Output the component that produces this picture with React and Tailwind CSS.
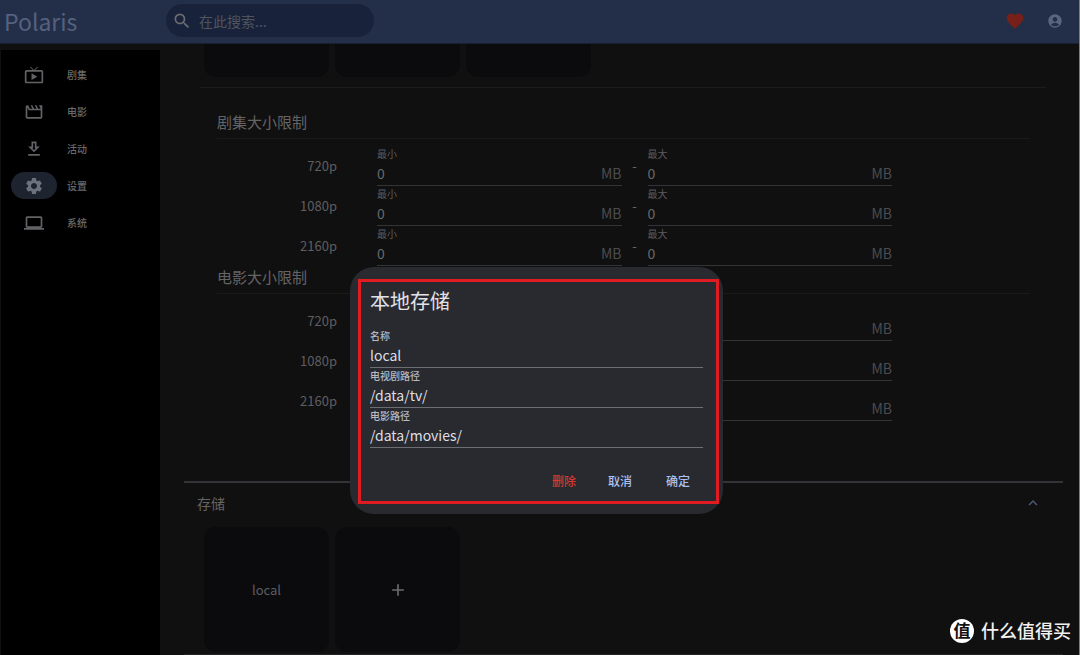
import {
  MdAccountCircle,
  MdAdd,
  MdExpandLess,
  MdFavorite,
  MdOutlineComputer,
  MdOutlineDownload,
  MdOutlineLiveTv,
  MdOutlineMovie,
  MdSearch,
  MdSettings,
} from "react-icons/md";

const navItems = [
  { label: "剧集", Icon: MdOutlineLiveTv },
  { label: "电影", Icon: MdOutlineMovie },
  { label: "活动", Icon: MdOutlineDownload },
  { label: "设置", Icon: MdSettings, active: true },
  { label: "系统", Icon: MdOutlineComputer },
];

const resolutions = ["720p", "1080p", "2160p"];

function Header() {
  return (
    <header className="flex h-11 shrink-0 items-center border-b border-[#192130] bg-[#232f48] pr-4 pb-0.5">
      <h1 className="w-[166px] shrink-0 pl-1 text-[23px] leading-8 text-[#55617f]">Polaris</h1>
      <label className="flex h-[33px] w-52 items-center gap-[7px] rounded-full bg-[#18233b] pl-1.5">
        <MdSearch className="size-5 shrink-0 text-[#6b6c72]" />
        <input
          type="search"
          aria-label="搜索"
          placeholder="在此搜索..."
          className="w-full min-w-0 bg-transparent pr-4 text-[14px] leading-5 outline-none placeholder:text-[#50545f]"
        />
      </label>
      <div className="ml-auto flex items-center gap-[22px]">
        <button type="button" aria-label="收藏">
          <MdFavorite className="size-5 text-[#77201a]" />
        </button>
        <button type="button" aria-label="账户">
          <MdAccountCircle className="size-4 text-[#59647f]" />
        </button>
      </div>
    </header>
  );
}

function Sidebar() {
  return (
    <nav className="mt-1.5 ml-px flex w-[159px] shrink-0 flex-col gap-2.5 bg-black pt-[11px] pl-2.5">
      {navItems.map(({ label, Icon, active }) => (
        <a
          key={label}
          href="#"
          aria-current={active ? "page" : undefined}
          className="flex h-[27px] items-center gap-2.5"
        >
          <span
            className={
              active
                ? "flex h-[27px] w-[46px] items-center justify-center rounded-full bg-[#1e242f] text-[#6c717c]"
                : "flex h-[27px] w-[46px] items-center justify-center text-[#636367]"
            }
          >
            <Icon className="size-5" />
          </span>
          <span className="text-[10px] leading-4 font-medium text-[#69696b]">{label}</span>
        </a>
      ))}
    </nav>
  );
}

function SizeField({ id, label }) {
  return (
    <div className="border-b border-[#343437]">
      <label htmlFor={id} className="block text-[10px] leading-4 text-[#5c5c60]">
        {label}
      </label>
      <div className="flex h-[23px] items-center pb-0.5 text-[14px] leading-5">
        <input
          id={id}
          defaultValue="0"
          className="w-full min-w-0 bg-transparent text-[#69696b] outline-none"
        />
        <span className="text-[#4c4c50]">MB</span>
      </div>
    </div>
  );
}

function SizeLimits({ title, name }) {
  return (
    <section>
      <h2 className="flex h-8 items-center border-b border-[#1a1a1b] pb-0.5 text-[15px] leading-6 text-[#646467]">
        {title}
      </h2>
      <div className="pt-[7px] pr-[138px]">
        {resolutions.map((res) => (
          <div key={res} className="grid h-10 grid-cols-[160px_1fr_26px_1fr]">
            <span className="pt-2.5 pr-10 text-right text-[13px] leading-5 text-[#5e5e61]">
              {res}
            </span>
            <SizeField id={`${name}-${res}-min`} label="最小" />
            <span className="pt-2.5 text-center text-[13px] leading-5 text-[#69696b]">-</span>
            <SizeField id={`${name}-${res}-max`} label="最大" />
          </div>
        ))}
      </div>
    </section>
  );
}

function Settings() {
  return (
    <main className="flex min-w-0 flex-1 flex-col overflow-hidden pr-4 pl-6">
      <div className="h-[437px] shrink-0 pr-[17px] pl-4">
        <div className="flex h-11 gap-1.5 border-b border-[#1c1c1d] pl-1">
          <div className="h-[33px] w-[125px] rounded-b-xl bg-[#0b0b0d]" />
          <div className="h-[33px] w-[125px] rounded-b-xl bg-[#0b0b0d]" />
          <div className="h-[33px] w-[125px] rounded-b-xl bg-[#0b0b0d]" />
        </div>
        <div className="pt-[19px] pr-4 pl-[17px]">
          <SizeLimits title="剧集大小限制" name="series" />
          <div className="-mt-1">
            <SizeLimits title="电影大小限制" name="movie" />
          </div>
        </div>
      </div>
      <section className="border-y-2 border-[#343438] border-b-[#232325]">
        <div className="flex h-11 items-center justify-between pr-[21px] pb-1 pl-[13px]">
          <h2 className="text-[14px] leading-5 text-[#646467]">存储</h2>
          <button type="button" aria-label="收起">
            <MdExpandLess className="size-[18px] text-[#4b5977]" />
          </button>
        </div>
        <div className="flex gap-1.5 pb-0.5 pl-5">
          <button type="button" className="size-[125px] rounded-xl bg-[#0b0b0d] text-[13px] text-[#5e5e61]">
            local
          </button>
          <button
            type="button"
            aria-label="添加"
            className="flex size-[125px] items-center justify-center rounded-xl bg-[#0b0b0d] text-[#6c6c6e]"
          >
            <MdAdd className="size-5" />
          </button>
        </div>
      </section>
    </main>
  );
}

function PathField({ id, label, value }) {
  return (
    <div className="h-10 border-b border-[#6d6e74]">
      <label htmlFor={id} className="block text-[10px] leading-4 font-medium text-[#b8b9c1]">
        {label}
      </label>
      <input
        id={id}
        defaultValue={value}
        className="block h-[21px] w-full bg-transparent text-[14px] leading-5 text-[#dedfe5] outline-none"
      />
    </div>
  );
}

function StorageDialog() {
  return (
    <div className="absolute inset-0 flex items-start justify-center pt-[267px] pr-1.5">
      <form
        role="dialog"
        aria-labelledby="dialog-title"
        onSubmit={(e) => e.preventDefault()}
        className="relative w-[373px] rounded-[24px] bg-[#292a2f] px-5 pt-5 pb-[23px]"
      >
        <h2 id="dialog-title" className="text-[20px] leading-7 text-[#e2e2e8]">
          本地存储
        </h2>
        <div className="pt-[13px]">
          <PathField id="storage-name" label="名称" value="local" />
          <PathField id="storage-tv" label="电视剧路径" value="/data/tv/" />
          <PathField id="storage-movies" label="电影路径" value="/data/movies/" />
        </div>
        <div className="flex justify-end pt-[23px] pr-[13px] text-[12px] leading-5 font-medium text-[#a9c0f5]">
          <button type="button" className="mr-8 text-[#d33a32]">删除</button>
          <button type="button" className="mr-[34px]">取消</button>
          <button type="submit">确定</button>
        </div>
        <div className="pointer-events-none absolute top-3 right-1 bottom-2.5 left-2 border-[3px] border-[#e01b22]" />
      </form>
    </div>
  );
}

function Watermark() {
  return (
    <div className="absolute right-2 bottom-[11px] flex items-center gap-[7px]">
      <span className="flex size-6 items-center justify-center rounded-full bg-white pb-0.5 text-[17px] leading-5 font-bold text-[#111]">
        值
      </span>
      <span className="pb-0.5 text-[18px] leading-6 font-medium text-[#f1f1f1]">什么值得买</span>
    </div>
  );
}

export default function App() {
  return (
    <div className="relative flex h-screen flex-col overflow-hidden border-r border-[#7d7d7d] bg-[#101010] font-['Noto_Sans_CJK_SC',sans-serif]">
      <Header />
      <div className="flex min-h-0 flex-1">
        <Sidebar />
        <Settings />
      </div>
      <StorageDialog />
      <Watermark />
    </div>
  );
}
